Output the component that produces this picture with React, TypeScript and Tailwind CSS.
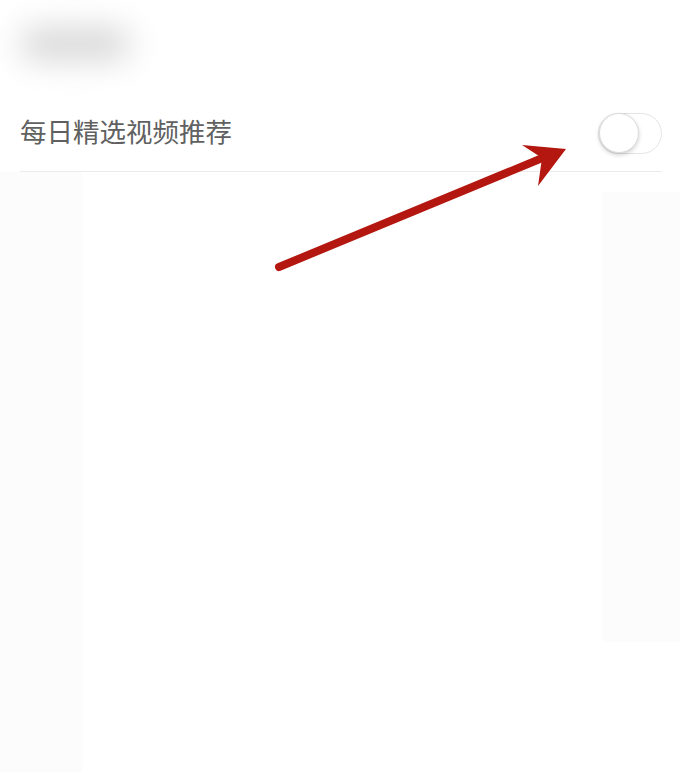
export default function App() {
  return (
    <div
      className="relative h-[773px] w-[680px] overflow-hidden bg-white"
      style={{ fontFamily: '"Noto Sans CJK SC", "Noto Sans", sans-serif' }}
    >
      {/* blurred page title */}
      <div className="h-[95px] pl-[20px] pt-[28px]">
        <div className="h-[32px] w-[110px] rounded-full bg-[#d6d6d6] blur-lg" />
      </div>

      <div className="ml-[20px] mr-[18px] flex h-[77px] items-center justify-between border-b border-[#ebebeb]">
        <span className="-mt-[3px] text-[26.5px] leading-none text-[#606060]">每日精选视频推荐</span>
        <div className="flex h-[41px] w-[64px] items-center rounded-full border border-[#e4e4e4] bg-white">
          <div className="h-[40px] w-[40px] rounded-full border border-[#dcdcdc] bg-white shadow-[0_2px_4px_rgba(0,0,0,0.18)]" />
        </div>
      </div>

      {/* faint background panels */}
      <div className="flex h-[600px]">
        <div className="w-[82px] bg-[#fcfcfc]" />
        <div className="flex-1 bg-white" />
        <div className="mt-[20px] h-[450px] w-[78px] bg-[#fcfcfc]" />
      </div>

      <svg className="absolute left-0 top-0" width="680" height="773" viewBox="0 0 680 773">
        <line x1="279" y1="267" x2="552" y2="154" stroke="#b3170f" strokeWidth="8" strokeLinecap="round" />
        <polygon points="566,149 522,145 542,158 538,186" fill="#b3170f" />
      </svg>
    </div>
  )
}
